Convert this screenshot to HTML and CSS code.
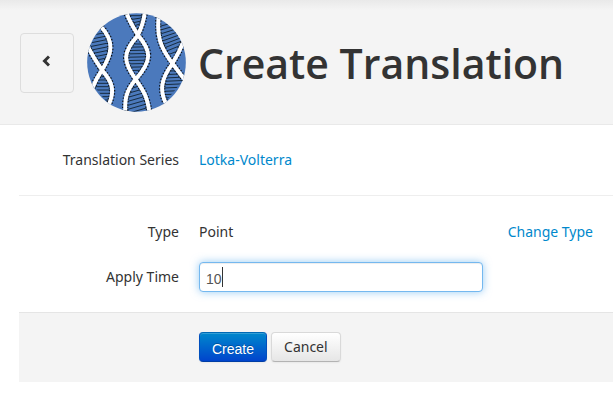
FILE: index.html
```html
<!DOCTYPE html>
<html lang="en">
<head>
<meta charset="utf-8">
<title>Create Translation</title>
<link rel="stylesheet" href="styles.css">
</head>
<body>
<header class="page-header">
  <button class="back" type="button" aria-label="Back">
    <svg class="back-icon" viewBox="0 0 8 12" aria-hidden="true"><path d="M7 1.500 L2.500 6 L7 10.500"/></svg>
  </button>
  <svg class="logo" viewBox="21 24 297 297" aria-hidden="true">
    <defs>
      <clipPath id="disc"><circle cx="169.500" cy="172.500" r="148"/></clipPath>
      <clipPath id="cells">
        <path d="M66 68C100 110 93 150 67 190C48 165 36 145 32 130C33 112 45 90 66 68Z"/>
        <path d="M67 198C95 225 105 255 88 300L42 244Q50 222 67 198Z"/>
        <path d="M140 20C146 45 158 62 174 90C184 65 193 50 194 20Z"/>
        <path d="M174 92C137 140 127 170 167 224C212 168 211 145 174 92Z"/>
        <path d="M170 225C135 270 135 290 137 324H210C206 285 200 260 170 225Z"/>
        <path d="M235 40C234 105 245 130 278 174C290 150 302 135 308 112Q290 70 235 40Z"/>
        <path d="M278 178C245 225 240 255 256 290L310 226Q295 198 278 178Z"/>
      </clipPath>
      <path id="strands" d="M64 66C103 110 97 145 66 195Q48 221 37 250M22 123C38 153 50 173 67 197C93 227 108 253 85 302M138 18C145 45 160 67 175 92C215 139 216 168 167 223C137 260 134 282 136 326M195 18C192 45 187 64 173 92C128 142 128 169 167 223C190 257 201 270 209 326M236 36C230 93 240 126 278 176Q298 203 317 228M313 104C299 139 292 151 276 178C242 223 239 257 258 296"/>
    </defs>
    <g clip-path="url(#disc)">
      <rect class="logo-fill" x="20" y="20" width="300" height="304"/>
      <g clip-path="url(#cells)">
        <path class="rungs" d="M20 94L110 76M20 105L110 87M20 116L110 98M20 127L110 109M20 138L110 120M20 149L110 131M20 160L110 142M20 171L110 153M20 182L110 164M20 215H110M20 225H110M20 235H110M20 245H110M20 255H110M20 265H110M20 275H110M20 285H110"/>
        <path class="rungs" d="M130 32H210M130 47L210 35M130 60L210 42M130 74L210 46M130 87L210 56M130 117H220M130 127L220 125M130 137L220 135M130 147L220 145M130 157L220 155M130 167L220 165M130 177L220 175M130 187L220 185M130 197L220 195M130 257L220 231M130 269L220 243M130 281L220 255M130 293L220 267M130 305L220 279M130 317L220 291M130 329L220 303M130 341L220 315"/>
        <path class="rungs" d="M225 68L320 42M225 80L320 52M225 92L320 62M225 104L320 72M225 116L320 82M225 128L320 92M225 140L320 102M225 152L320 114M225 164L320 128M230 200L320 196M230 210L320 206M230 220L320 216M230 230L320 226M230 240L320 236M230 250L320 246M230 260L320 256M230 270L320 266M230 280L320 276"/>
      </g>
      <use class="strand-dots" href="#strands"/>
      <use class="strand" href="#strands"/>
    </g>
  </svg>
  <h1>Create Translation</h1>
</header>
<form class="form">
  <section class="group">
    <div class="row">
      <span class="label">Translation Series</span>
      <a href="#">Lotka-Volterra</a>
    </div>
  </section>
  <section class="group">
    <div class="row">
      <span class="label">Type</span>
      <span>Point</span>
      <a class="change" href="#">Change Type</a>
    </div>
    <div class="row">
      <label class="label" for="time">Apply Time</label>
      <div class="field">
        <input id="time" type="text" value="10">
        <span class="caret" aria-hidden="true"></span>
      </div>
    </div>
  </section>
  <footer class="actions">
    <button class="btn primary" type="submit">Create</button>
    <button class="btn" type="button">Cancel</button>
  </footer>
</form>
</body>
</html>
```
FILE: styles.css
```css
* { box-sizing: border-box; }
body {
  margin: 0;
  background: #fff;
  color: #333;
  font: 14px/20px "Noto Sans", "Open Sans", sans-serif;
}
a { color: #08c; text-decoration: none; }
.page-header {
  display: flex;
  align-items: center;
  height: 125px;
  padding: 1px 0 0 20px;
  background: linear-gradient(#e9e9e9, #f4f4f4 10px);
  border-bottom: 1px solid #e9e9e9;
}
.back {
  display: flex;
  align-items: center;
  justify-content: center;
  width: 54px;
  height: 60px;
  padding: 0 2px 4px 0;
  background: #f4f4f4;
  border: 1px solid #ddd;
  border-radius: 4px;
}
.back-icon { width: 8px; height: 12px; }
.back-icon path { fill: none; stroke: #333; stroke-width: 3; }
.logo { width: 99px; height: 99px; margin: 0 12px 0 13px; }
.logo-fill { fill: #4b79bc; }
.rungs { fill: none; stroke: #172c40; stroke-width: 3; }
.strand, .strand-dots { fill: none; }
.strand { stroke: #fff; stroke-width: 12; }
.strand-dots { stroke: #0c121a; stroke-width: 19; stroke-dasharray: 4 5; }
h1 {
  margin: 0;
  font-family: "Open Sans", sans-serif;
  font-size: 41px;
  line-height: 50px;
  font-weight: 600;
  white-space: nowrap;
}
.form { margin-left: 19px; }
.group {
  display: grid;
  gap: 15px;
  padding: 20px 20px 20px 0;
}
.group + .group { padding-top: 21px; border-top: 1px solid #eee; }
.row {
  display: grid;
  grid-template-columns: 160px 284px 1fr;
  column-gap: 20px;
  align-items: center;
  min-height: 30px;
}
.label { text-align: right; }
.change { justify-self: end; margin-left: -20px; white-space: nowrap; }
.field { position: relative; }
input {
  display: block;
  width: 100%;
  height: 30px;
  padding: 6px 6px 2px;
  border: 1px solid #74b8ef;
  border-radius: 4px;
  outline: 0;
  color: #555;
  font: 14px/20px "Liberation Sans", sans-serif;
  box-shadow: inset 0 1px 1px rgba(0, 0, 0, .075), 0 0 8px rgba(82, 168, 236, .6);
}
.caret {
  position: absolute;
  left: 23px;
  top: 5px;
  width: 1px;
  height: 20px;
  background: #333;
}
.actions {
  display: flex;
  gap: 4px;
  padding: 19px 20px 20px 180px;
  background: #f4f4f4;
  border-top: 1px solid #e5e5e5;
}
.btn {
  height: 30px;
  padding: 4px 12px;
  border: 1px solid #ccc;
  border-color: #d9d9d9 #d9d9d9 #b3b3b3;
  border-radius: 4px;
  background: linear-gradient(#fff, #e6e6e6);
  color: #333;
  font: 14px/20px "Noto Sans", "Open Sans", sans-serif;
  box-shadow: inset 0 1px 0 rgba(255, 255, 255, .2), 0 1px 2px rgba(0, 0, 0, .05);
}
.primary {
  padding: 6px 12px 2px;
  border-color: #0069b5 #004fbd #003da5;
  background: linear-gradient(#08c, #04c);
  color: #fff;
  font-family: "Liberation Sans", sans-serif;
  text-shadow: 0 -1px 0 rgba(0, 0, 0, .25);
}
```
